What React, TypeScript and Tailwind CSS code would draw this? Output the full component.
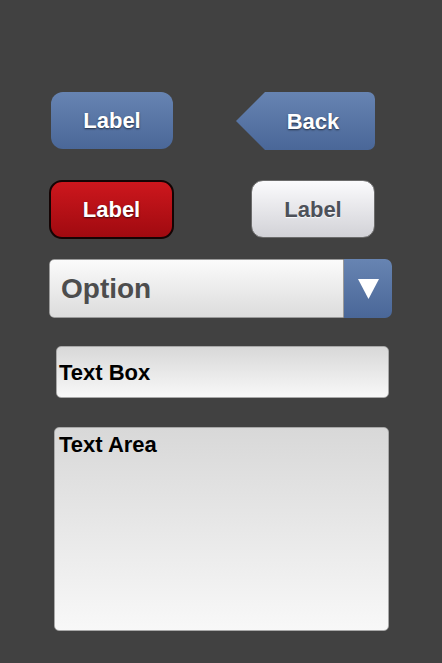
const font = { fontFamily: '"Liberation Sans", Arial, sans-serif' };

function BlueButton({ label }: { label: string }) {
  return (
    <button className="flex h-[57px] w-[122px] items-center justify-center rounded-[12px] bg-gradient-to-b from-[#6784b2] to-[#4a6798] text-[22px] font-bold text-white [text-shadow:0_1px_2px_rgba(0,0,0,0.6)]">
      {label}
    </button>
  );
}

function BackButton() {
  return (
    <div className="flex h-[58px] w-[139px]">
      <svg width="31" height="58" viewBox="0 0 31 58" className="shrink-0">
        <defs>
          <linearGradient id="backGrad" x1="0" y1="0" x2="0" y2="1">
            <stop offset="0" stopColor="#6784b2" />
            <stop offset="1" stopColor="#4a6798" />
          </linearGradient>
        </defs>
        <path d="M31 0 L31 58 L29 58 L0 29 L29 0 Z" fill="url(#backGrad)" />
      </svg>
      <div className="flex flex-1 items-center justify-center rounded-r-[7px] bg-gradient-to-b from-[#6784b2] to-[#4a6798] pr-[16px] text-[22px] font-bold text-white [text-shadow:0_1px_2px_rgba(0,0,0,0.6)]">
        Back
      </div>
    </div>
  );
}

export default function App() {
  return (
    <div className="flex min-h-[663px] w-[442px] flex-col bg-[#414141] pb-[32px]" style={font}>
      <div className="mt-[92px] flex items-start">
        <div className="ml-[51px]">
          <BlueButton label="Label" />
        </div>
        <div className="ml-[63px]">
          <BackButton />
        </div>
      </div>

      <div className="mt-[30px] flex items-start">
        <button className="ml-[49px] flex h-[59px] w-[125px] items-center justify-center rounded-[13px] border-2 border-[#140404] bg-gradient-to-b from-[#cd171d] to-[#a00a10] text-[22px] font-bold text-white [text-shadow:0_1px_2px_rgba(0,0,0,0.6)]">
          Label
        </button>
        <button className="ml-[77px] flex h-[58px] w-[124px] items-center justify-center rounded-[12px] border border-[#6b6b6b] bg-gradient-to-b from-[#fbfbfd] to-[#d2d2d7] text-[22px] font-bold text-[#4d5159] [text-shadow:0_1px_1px_rgba(255,255,255,0.8)]">
          Label
        </button>
      </div>

      <div className="ml-[49px] mt-[20px] flex h-[59px] w-[343px] overflow-hidden rounded-[5px]">
        <div className="flex flex-1 items-center rounded-l-[5px] border border-[#9a9a9a] bg-gradient-to-b from-[#fbfbfb] to-[#dcdcdc] pl-[11px] text-[28px] font-bold text-[#4d4d4d]">
          Option
        </div>
        <div className="flex w-[48px] items-center justify-center rounded-r-[7px] bg-gradient-to-b from-[#6784b2] to-[#4a6798]">
          <svg width="21" height="20" viewBox="0 0 21 20">
            <path d="M0 0 L21 0 L10.5 20 Z" fill="#ffffff" />
          </svg>
        </div>
      </div>

      <div className="ml-[56px] mt-[28px] flex h-[52px] w-[333px] items-center rounded-[5px] border border-[#a8a8a8] bg-gradient-to-b from-[#d8d8d8] to-[#f8f8f8] pl-[2px] text-[22px] font-bold text-black">
        Text Box
      </div>

      <div className="ml-[54px] mt-[29px] h-[204px] w-[335px] rounded-[5px] border border-[#a8a8a8] bg-gradient-to-b from-[#d8d8d8] to-[#f8f8f8] pl-[4px] pt-[6px] text-[22px] font-bold leading-[22px] text-black">
        Text Area
      </div>
    </div>
  );
}
